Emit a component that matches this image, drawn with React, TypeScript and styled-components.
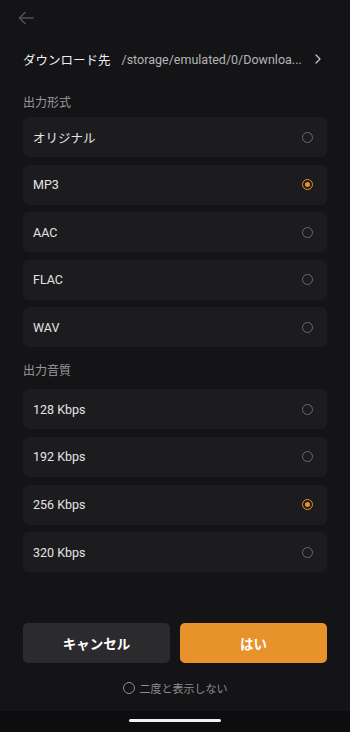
import * as React from 'react';
import styled, { createGlobalStyle } from 'styled-components';

const colors = {
  BG: '#141416',
  CARD: '#1c1c1e',
  TEXT: '#e4e4e6',
  SUB: '#9a9a9c',
  ORANGE: '#e8922b',
  RADIO: '#6a6a6c',
};

const GlobalStyle = createGlobalStyle`
  html, body {
    margin: 0;
    padding: 0;
    background: ${colors.BG};
  }
  body {
    font-family: Roboto, "Noto Sans CJK JP", sans-serif;
    -webkit-font-smoothing: antialiased;
  }
`;

const Screen = styled.div`
  width: 350px;
  height: 732px;
  background: ${colors.BG};
  display: flex;
  flex-direction: column;
  overflow: hidden;
`;

const Content = styled.div`
  flex: 1;
  display: flex;
  flex-direction: column;
  padding: 0 23px;
`;

const TopBar = styled.div`
  height: 36px;
  display: flex;
  align-items: center;
  margin-left: -5px;
`;

const DestRow = styled.div`
  display: flex;
  align-items: center;
  height: 42px;
  margin-top: 2px;
`;

const DestLabel = styled.div`
  color: #f0f0f2;
  font-size: 12.5px;
  font-weight: 400;
  white-space: nowrap;
  margin-right: 11px;
`;

const DestPath = styled.div`
  flex: 1;
  color: #b4b4b6;
  font-size: 12.5px;
  white-space: nowrap;
`;

const Chevron = styled.div`
  display: flex;
  align-items: center;
  margin-right: 6px;
`;

const SectionTitle = styled.div<{ $top: number; $bottom: number }>`
  color: ${colors.SUB};
  font-size: 12px;
  height: 14px;
  line-height: 14px;
  margin: ${(p) => `${p.$top}px 0 ${p.$bottom}px`};
`;

const List = styled.div`
  display: flex;
  flex-direction: column;
  gap: 7.6px;
`;

const Option = styled.div`
  height: 40px;
  border-radius: 6px;
  background: ${colors.CARD};
  display: flex;
  align-items: center;
  justify-content: space-between;
  padding: 0 14px 0 10px;
`;

const OptionLabel = styled.span`
  color: ${colors.TEXT};
  font-size: 12.5px;
`;

const Radio = styled.span<{ $checked?: boolean }>`
  width: 9px;
  height: 9px;
  border-radius: 50%;
  border: 1.4px solid ${(p) => (p.$checked ? colors.ORANGE : colors.RADIO)};
  display: flex;
  align-items: center;
  justify-content: center;
  &::after {
    content: '';
    width: 5px;
    height: 5px;
    border-radius: 50%;
    background: ${(p) => (p.$checked ? colors.ORANGE : 'transparent')};
  }
`;

const Spacer = styled.div`
  flex: 1;
`;

const Buttons = styled.div`
  display: flex;
  gap: 10px;
`;

const Button = styled.button<{ $primary?: boolean }>`
  flex: 1;
  height: 40px;
  border: none;
  border-radius: 5px;
  background: ${(p) => (p.$primary ? colors.ORANGE : '#2b2b2d')};
  color: #fff;
  font-family: Roboto, "Noto Sans CJK JP", sans-serif;
  font-size: 13.5px;
  font-weight: 700;
`;

const Dont = styled.div`
  display: flex;
  align-items: center;
  justify-content: center;
  gap: 5px;
  color: #8e8e90;
  height: 26px;
  margin: 12px 0 10px;
`;

const DontText = styled.span`
  font-family: "Noto Sans CJK JP", sans-serif;
  font-size: 11px;
  white-space: nowrap;
`;

const SmallRadio = styled.span`
  width: 10px;
  height: 10px;
  border-radius: 50%;
  border: 1.1px solid #8e8e90;
`;

const NavBar = styled.div`
  height: 21px;
  background: #0c0d0f;
  display: flex;
  justify-content: center;
  padding-top: 8px;
  box-sizing: border-box;
`;

const Handle = styled.div`
  width: 92px;
  height: 3px;
  border-radius: 2px;
  background: #f2f2f2;
`;

const formats = ['オリジナル', 'MP3', 'AAC', 'FLAC', 'WAV'];
const qualities = ['128 Kbps', '192 Kbps', '256 Kbps', '320 Kbps'];

const OptionList: React.FC<{ items: string[]; selected: string }> = ({ items, selected }) => (
  <List>
    {items.map((item) => (
      <Option key={item}>
        <OptionLabel>{item}</OptionLabel>
        <Radio $checked={item === selected} />
      </Option>
    ))}
  </List>
);

const App: React.FC = () => (
  <>
    <GlobalStyle />
    <Screen lang="ja">
      <Content>
        <TopBar>
          <svg width="16" height="14" viewBox="0 0 16 14" fill="none" stroke="#505052" strokeWidth="1.6" strokeLinecap="round" strokeLinejoin="round">
            <path d="M15 7H1.5" />
            <path d="M7 1.5L1.5 7 7 12.5" />
          </svg>
        </TopBar>
        <DestRow>
          <DestLabel>ダウンロード先</DestLabel>
          <DestPath>/storage/emulated/0/Downloa...</DestPath>
          <Chevron>
            <svg width="6" height="10" viewBox="0 0 6 10" fill="none" stroke="#c8c8ca" strokeWidth="1.2" strokeLinecap="round" strokeLinejoin="round">
              <path d="M1 1l4 4-4 4" />
            </svg>
          </Chevron>
        </DestRow>
        <SectionTitle $top={16} $bottom={7}>出力形式</SectionTitle>
        <OptionList items={formats} selected="MP3" />
        <SectionTitle $top={17} $bottom={11}>出力音質</SectionTitle>
        <OptionList items={qualities} selected="256 Kbps" />
        <Spacer />
        <Buttons>
          <Button>キャンセル</Button>
          <Button $primary>はい</Button>
        </Buttons>
        <Dont>
          <SmallRadio />
          <DontText>二度と表示しない</DontText>
        </Dont>
      </Content>
      <NavBar>
        <Handle />
      </NavBar>
    </Screen>
  </>
);

export default App;
